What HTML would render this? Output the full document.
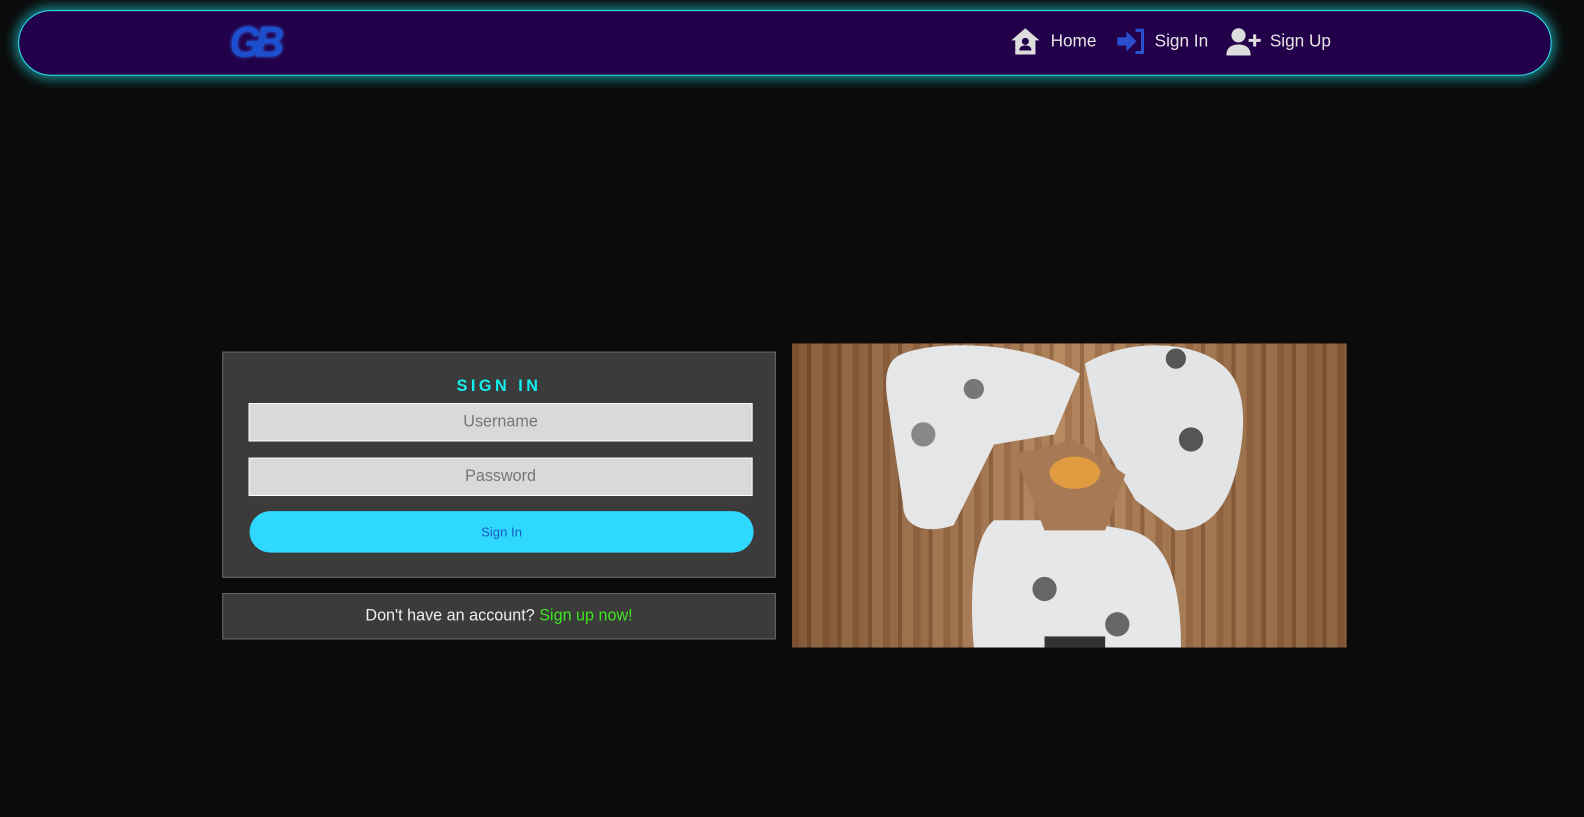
<!DOCTYPE html>
<html><head><meta charset="utf-8"><style>
*{box-sizing:border-box;margin:0;padding:0}
body{width:1584px;height:817px;background:#0b0b0b;font-family:"Liberation Sans",sans-serif;position:relative;overflow:hidden}
#w{position:absolute;left:0;top:0;width:1568px;height:809px;transform:scale(1.0102);transform-origin:0 0}
.nav{position:absolute;left:18px;top:10px;width:1518px;height:65px;background:#22004a;border:1.5px solid #2ee6f0;border-radius:33px;box-shadow:0 0 12px 3px rgba(30,200,210,.7)}
.logo{position:absolute;left:226px;top:18px;font:italic bold 42px "Liberation Sans",sans-serif;color:#1c4fd0;text-shadow:0 0 4px #2a6ff0;letter-spacing:-6px;transform:scaleX(.95)}
.nv{position:absolute;top:30px;color:#e6e6e6;font-size:17px}
.box{position:absolute;left:220px;top:348px;width:548px;height:224px;background:#3b3b3b;border:1px solid #6a6a6a}
h1{position:absolute;left:0;right:0;top:25px;text-align:center;color:#13f0f0;font-size:16px;letter-spacing:3.5px;font-weight:bold}
.in{position:absolute;left:25px;width:499px;height:38px;background:#d9d9d9;border:1px solid #fff;text-align:center;line-height:36px;color:#777;font-size:16px}
.btn{position:absolute;left:26px;top:157px;width:499px;height:41px;background:#2ed8ff;border-radius:21px;text-align:center;line-height:41px;color:#1f5cc0;font-size:13px}
.box2{position:absolute;left:220px;top:587px;width:548px;height:46px;background:#3b3b3b;border:1px solid #6a6a6a;text-align:center;line-height:44px;color:#eee;font-size:16px}
.img{position:absolute;left:784px;top:340px;width:549px;height:301px;background:linear-gradient(90deg,rgba(60,30,10,.35),rgba(255,220,180,.1) 50%,rgba(60,30,10,.3)),repeating-linear-gradient(90deg,#9a6a45 0 7px,#a87a52 7px 15px,#8c5e3c 15px 19px,#b0835a 19px 30px);overflow:hidden}
</style></head><body><div id="w">
<div class="nav"></div>
<div class="logo">GB</div>
<svg style="position:absolute;left:1000px;top:27px" width="30" height="28" viewBox="0 0 30 28"><path d="M15 1L1 13h4v14h20V13h4z" fill="#ddd"/><circle cx="15" cy="14" r="3.5" fill="#22004a"/><path d="M9 23c0-4 3-5 6-5s6 1 6 5z" fill="#22004a"/></svg>
<div class="nv" style="left:1040px;top:31px">Home</div>
<svg style="position:absolute;left:1105px;top:28px" width="30" height="26" viewBox="0 0 30 26"><path d="M1 9h9V3l10 10-10 10v-6H1z" fill="#2a4fcf"/><path d="M19 2h7v22h-7" stroke="#2a4fcf" stroke-width="3" fill="none"/></svg>
<div class="nv" style="left:1143px;top:31px">Sign In</div>
<svg style="position:absolute;left:1214px;top:27px" width="36" height="28" viewBox="0 0 36 28"><circle cx="12" cy="8" r="7" fill="#ddd"/><path d="M0 28c0-8 5-11 12-11s12 3 12 11z" fill="#ddd"/><path d="M28 7v12M22 13h12" stroke="#ddd" stroke-width="3"/></svg>
<div class="nv" style="left:1257px;top:31px">Sign Up</div>
<div class="box"><h1>SIGN IN</h1>
<div class="in" style="top:50px">Username</div>
<div class="in" style="top:104px">Password</div>
<div class="btn">Sign In</div></div>
<div class="box2">Don't have an account? <span style="color:#3ee61e">Sign up now!</span></div>
<div class="img">
<svg width="549" height="301" viewBox="0 0 549 301">
<path d="M110 10c40-15 130-10 175 20l-25 60-60 10-40 80c-30 10-50 0-50-20l-15-100c-5-30 0-45 15-50z" fill="#e4e6e8"/>
<path d="M290 20c40-25 110-25 140 5 20 20 20 60 10 100-10 40-30 60-60 60l-40-30-35-60z" fill="#e2e4e6"/>
<path d="M200 175l80 0 55 10c40 10 50 60 50 116H180c-5-60 0-110 20-126z" fill="#e6e7e9"/>
<path d="M220 110l60-15 50 35-20 55-60 0z" fill="#a77a55"/>
<ellipse cx="280" cy="128" rx="25" ry="16" fill="#e09a40"/>
<circle cx="180" cy="45" r="10" fill="#777"/><circle cx="130" cy="90" r="12" fill="#888"/>
<circle cx="380" cy="15" r="10" fill="#555"/><circle cx="395" cy="95" r="12" fill="#555"/>
<circle cx="250" cy="243" r="12" fill="#666"/><circle cx="322" cy="278" r="12" fill="#666"/>
<rect x="250" y="290" width="60" height="11" fill="#333"/>
</svg></div>
</div></body></html>
